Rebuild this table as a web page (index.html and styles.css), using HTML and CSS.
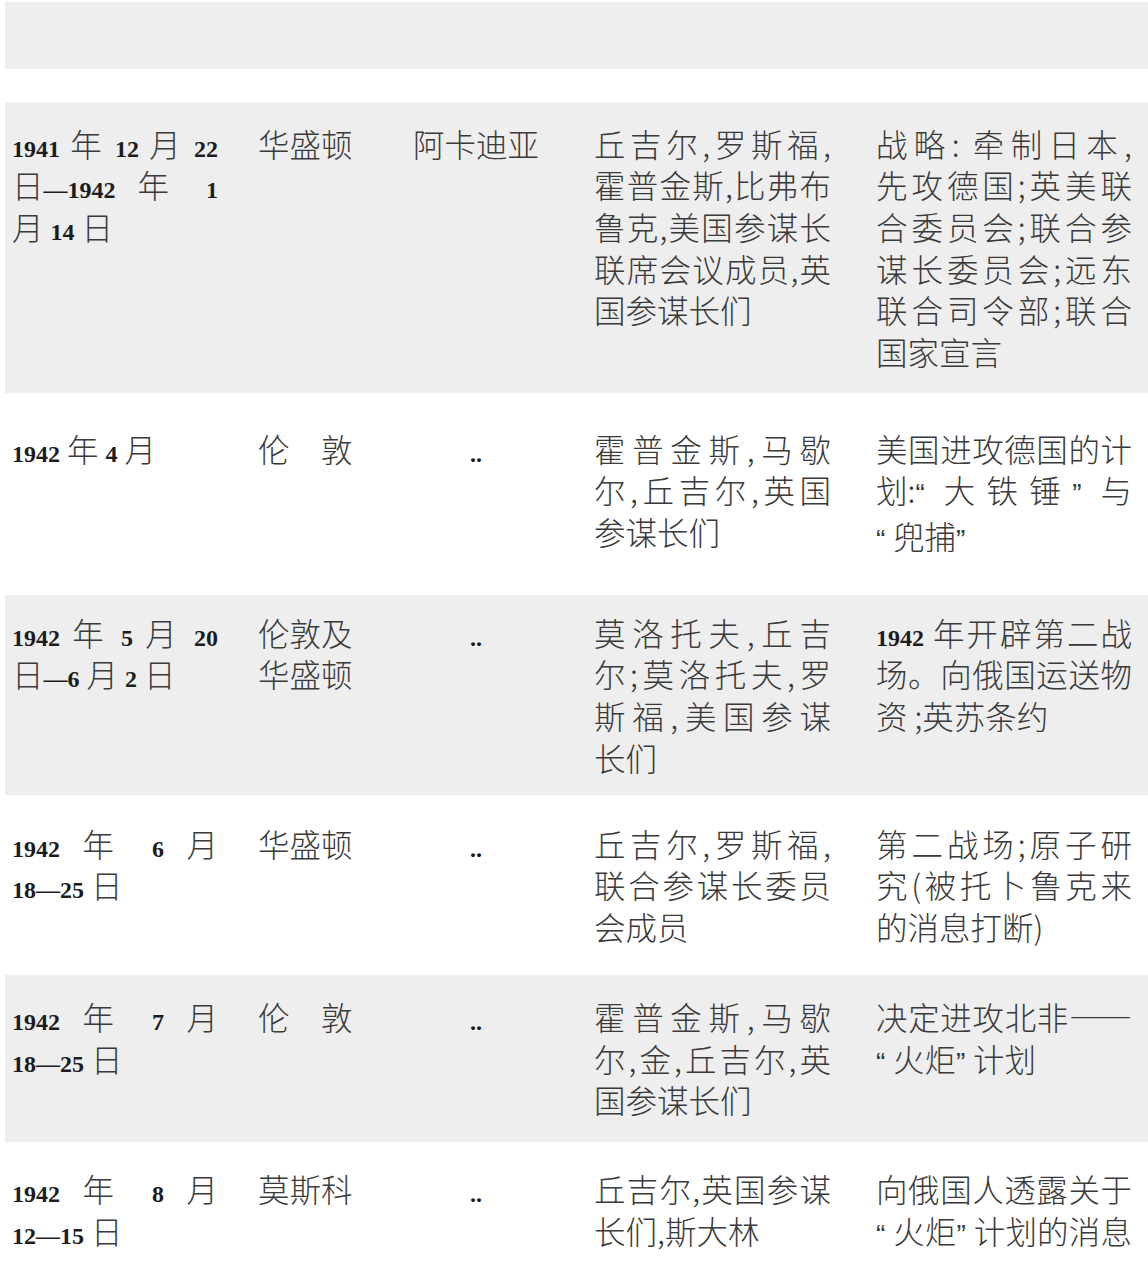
FILE: index.html
```html
<!DOCTYPE html>
<html lang="zh-CN">
<head>
<meta charset="utf-8">
<title>会议表</title>
<link rel="stylesheet" href="styles.css">
</head>
<body>
<div class="page">
  <div class="band"></div>

  <div class="row gray h291">
    <div class="c c1">
      <span class="l"><span class="n">1941</span> 年 <span class="n">12</span> 月 <span class="n">22</span></span>
      <span class="l"><span class="nb">日<span class="n">—1942</span></span> 年 <span class="n">1</span></span>
      <span class="e">月 <span class="n">14</span> 日</span>
    </div>
    <div class="c c2">华盛顿</div>
    <div class="c c3">阿卡迪亚</div>
    <div class="c c4">
      <span class="l">丘吉尔,罗斯福,</span>
      <span class="l">霍普金斯,比弗布</span>
      <span class="l">鲁克,美国参谋长</span>
      <span class="l">联席会议成员,英</span>
      <span class="e">国参谋长们</span>
    </div>
    <div class="c c5">
      <span class="l">战略: 牵制日本,</span>
      <span class="l">先攻德国;英美联</span>
      <span class="l">合委员会;联合参</span>
      <span class="l">谋长委员会;远东</span>
      <span class="l">联合司令部;联合</span>
      <span class="e">国家宣言</span>
    </div>
  </div>

  <div class="row h202">
    <div class="c c1"><span class="e"><span class="n">1942</span> 年 <span class="n">4</span> 月</span></div>
    <div class="c c2">伦　敦</div>
    <div class="c c3"><span class="n">..</span></div>
    <div class="c c4">
      <span class="l">霍普金斯,马歇</span>
      <span class="l">尔,丘吉尔,英国</span>
      <span class="e">参谋长们</span>
    </div>
    <div class="c c5">
      <span class="l">美国进攻德国的计</span>
      <span class="l"><span class="nb">划:</span><span class="q">“</span>大铁锤<span class="q">”</span>与</span>
      <span class="e"><span class="q">“</span>兜捕<span class="q">”</span></span>
    </div>
  </div>

  <div class="row gray h200">
    <div class="c c1">
      <span class="l"><span class="n">1942</span> 年 <span class="n">5</span> 月 <span class="n">20</span></span>
      <span class="e"><span class="nb">日<span class="n">—6</span></span> 月 <span class="n">2</span> 日</span>
    </div>
    <div class="c c2">
      <span class="e">伦敦及</span>
      <span class="e">华盛顿</span>
    </div>
    <div class="c c3"><span class="n">..</span></div>
    <div class="c c4">
      <span class="l">莫洛托夫,丘吉</span>
      <span class="l">尔;莫洛托夫,罗</span>
      <span class="l">斯福,美国参谋</span>
      <span class="e">长们</span>
    </div>
    <div class="c c5">
      <span class="l"><span class="n">1942</span> 年开辟第二战</span>
      <span class="l">场。向俄国运送物</span>
      <span class="e">资 ;英苏条约</span>
    </div>
  </div>

  <div class="row h180">
    <div class="c c1">
      <span class="l"><span class="n">1942</span> 年 <span class="n">6</span> 月</span>
      <span class="e"><span class="n">18—25</span> 日</span>
    </div>
    <div class="c c2">华盛顿</div>
    <div class="c c3"><span class="n">..</span></div>
    <div class="c c4">
      <span class="l">丘吉尔,罗斯福,</span>
      <span class="l">联合参谋长委员</span>
      <span class="e">会成员</span>
    </div>
    <div class="c c5">
      <span class="l">第二战场;原子研</span>
      <span class="l">究(被托卜鲁克来</span>
      <span class="e">的消息打断)</span>
    </div>
  </div>

  <div class="row gray h167">
    <div class="c c1">
      <span class="l"><span class="n">1942</span> 年 <span class="n">7</span> 月</span>
      <span class="e"><span class="n">18—25</span> 日</span>
    </div>
    <div class="c c2">伦　敦</div>
    <div class="c c3"><span class="n">..</span></div>
    <div class="c c4">
      <span class="l">霍普金斯,马歇</span>
      <span class="l">尔,金,丘吉尔,英</span>
      <span class="e">国参谋长们</span>
    </div>
    <div class="c c5">
      <span class="l">决定进攻北非——</span>
      <span class="e"><span class="q">“</span>火炬<span class="q">”</span>计划</span>
    </div>
  </div>

  <div class="row last">
    <div class="c c1">
      <span class="l"><span class="n">1942</span> 年 <span class="n">8</span> 月</span>
      <span class="e"><span class="n">12—15</span> 日</span>
    </div>
    <div class="c c2">莫斯科</div>
    <div class="c c3"><span class="n">..</span></div>
    <div class="c c4">
      <span class="l">丘吉尔,英国参谋</span>
      <span class="e">长们,斯大林</span>
    </div>
    <div class="c c5">
      <span class="l">向俄国人透露关于</span>
      <span class="l"><span class="q">“</span>火炬<span class="q">”</span>计划的消息</span>
    </div>
  </div>
</div>
</body>
</html>
```

FILE: styles.css
```css
html, body {
  margin: 0;
  padding: 0;
  background: #ffffff;
  overflow: hidden;
}

body {
  font-family: "Noto Sans CJK SC", "Noto Sans", sans-serif;
  font-size: 31.5px;
  font-weight: 300;
  line-height: 41.6px;
  color: #3a3a3a;
}

.page {
  padding: 2px 0 0 5px;
}

.band {
  height: 67px;
  background: #eeeeee;
  margin-bottom: 33px;
}

.row {
  display: grid;
  grid-template-columns: 246px 122px 214px 282px 256px;
  padding-left: 7px;
  align-content: center;
  align-items: start;
  box-sizing: border-box;
}

.gray {
  background: #eeeeee;
}

.h291 { height: 291px; }
.h202 { height: 202px; }
.h200 { height: 200px; }
.h180 { height: 180px; }
.h167 { height: 167px; }

.last {
  height: 124px;
  padding-top: 26px;
  align-content: start;
}

.c {
  box-sizing: border-box;
  white-space: nowrap;
}

.c1 { padding-right: 40px; }
.c3 { padding-right: 22px; text-align: center; }
.c4 { padding-right: 45px; }

.l {
  display: block;
  text-align: justify;
  text-align-last: justify;
}

.e {
  display: block;
}

.nb {
  display: inline-block;
}

.q {
  display: inline-block;
  width: 17px;
  text-align: left;
  font-family: "Liberation Sans", sans-serif;
  font-size: 28px;
}

.n {
  font-family: "Liberation Serif", serif;
  font-size: 24px;
  font-weight: bold;
  color: #1c1c1c;
  line-height: 1;
  font-variant-numeric: oldstyle-nums;
}
```
